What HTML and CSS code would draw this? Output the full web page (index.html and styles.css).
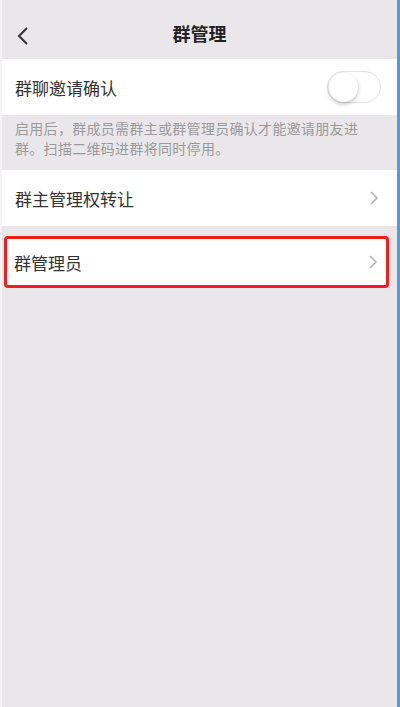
FILE: index.html
```html
<!DOCTYPE html>
<html lang="zh-CN">
<head>
  <meta charset="UTF-8">
  <meta name="viewport" content="width=device-width, initial-scale=1.0">
  <title>群管理</title>
  <link rel="stylesheet" href="styles.css">
</head>
<body>
  <div class="page">
    <div class="header">
      <span class="back">
        <svg width="14" height="20" viewBox="0 0 14 20"><path d="M11 2 L3 10 L11 18" fill="none" stroke="#333" stroke-width="2"/></svg>
      </span>
      <h1>群管理</h1>
    </div>

    <div class="row">
      <span>群聊邀请确认</span>
      <span class="toggle"><span class="knob"></span></span>
    </div>
    <p class="note">启用后，群成员需群主或群管理员确认才能邀请朋友进群。扫描二维码进群将同时停用。</p>

    <div class="row">
      <span>群主管理权转让</span>
      <svg class="arrow" width="10" height="16" viewBox="0 0 10 16"><path d="M2 2 L8 8 L2 14" fill="none" stroke="#b5b5b5" stroke-width="1.6"/></svg>
    </div>

    <div class="row highlight">
      <span>群管理员</span>
      <svg class="arrow" width="10" height="16" viewBox="0 0 10 16"><path d="M2 2 L8 8 L2 14" fill="none" stroke="#b5b5b5" stroke-width="1.6"/></svg>
    </div>
  </div>
</body>
</html>
```

FILE: styles.css
```css
* {
  box-sizing: border-box;
}
body {
  margin: 0;
  font-family: "Noto Sans CJK SC", "Noto Sans", sans-serif;
  background-color: #e9e7ea;
  color: #333;
}
.page {
  height: 707px;
  background-color: #e9e7ea;
  border-left: 2px solid #f4f3f6;
  border-right: 3px solid #4a9de0;
}
.header {
  height: 59px;
  padding-top: 6px;
  display: flex;
  align-items: center;
  justify-content: center;
  position: relative;
}
.header h1 {
  margin: 0;
  font-size: 18px;
  font-weight: bold;
  color: #222;
}
.back {
  position: absolute;
  left: 14px;
  top: 26px;
  display: flex;
}
.row {
  background: #fff;
  height: 56px;
  padding: 0 16px 0 13px;
  display: flex;
  align-items: center;
  justify-content: space-between;
  font-size: 17px;
  color: #333;
}
.note {
  margin: 0;
  padding: 3px 30px 12px 13px;
  font-size: 14px;
  letter-spacing: 0.3px;
  line-height: 20px;
  color: #9a9a9a;
  height: 55px;
}
.note + .row {
  margin-bottom: 10px;
}
.toggle {
  width: 54px;
  height: 32px;
  border-radius: 16px;
  border: 1px solid #e2e2e2;
  background: #fff;
  display: flex;
  align-items: center;
  padding-left: 1px;
}
.knob {
  width: 29px;
  height: 29px;
  border-radius: 50%;
  background: #fff;
  box-shadow: 0 2px 4px rgba(0, 0, 0, 0.25);
}
.arrow {
  margin-right: 2px;
}
.highlight {
  height: 52px;
  margin: 0 8px 0 2px;
  padding-left: 7px;
  padding-right: 6px;
  border: 3px solid #f21d1d;
  border-radius: 4px;
}
```
